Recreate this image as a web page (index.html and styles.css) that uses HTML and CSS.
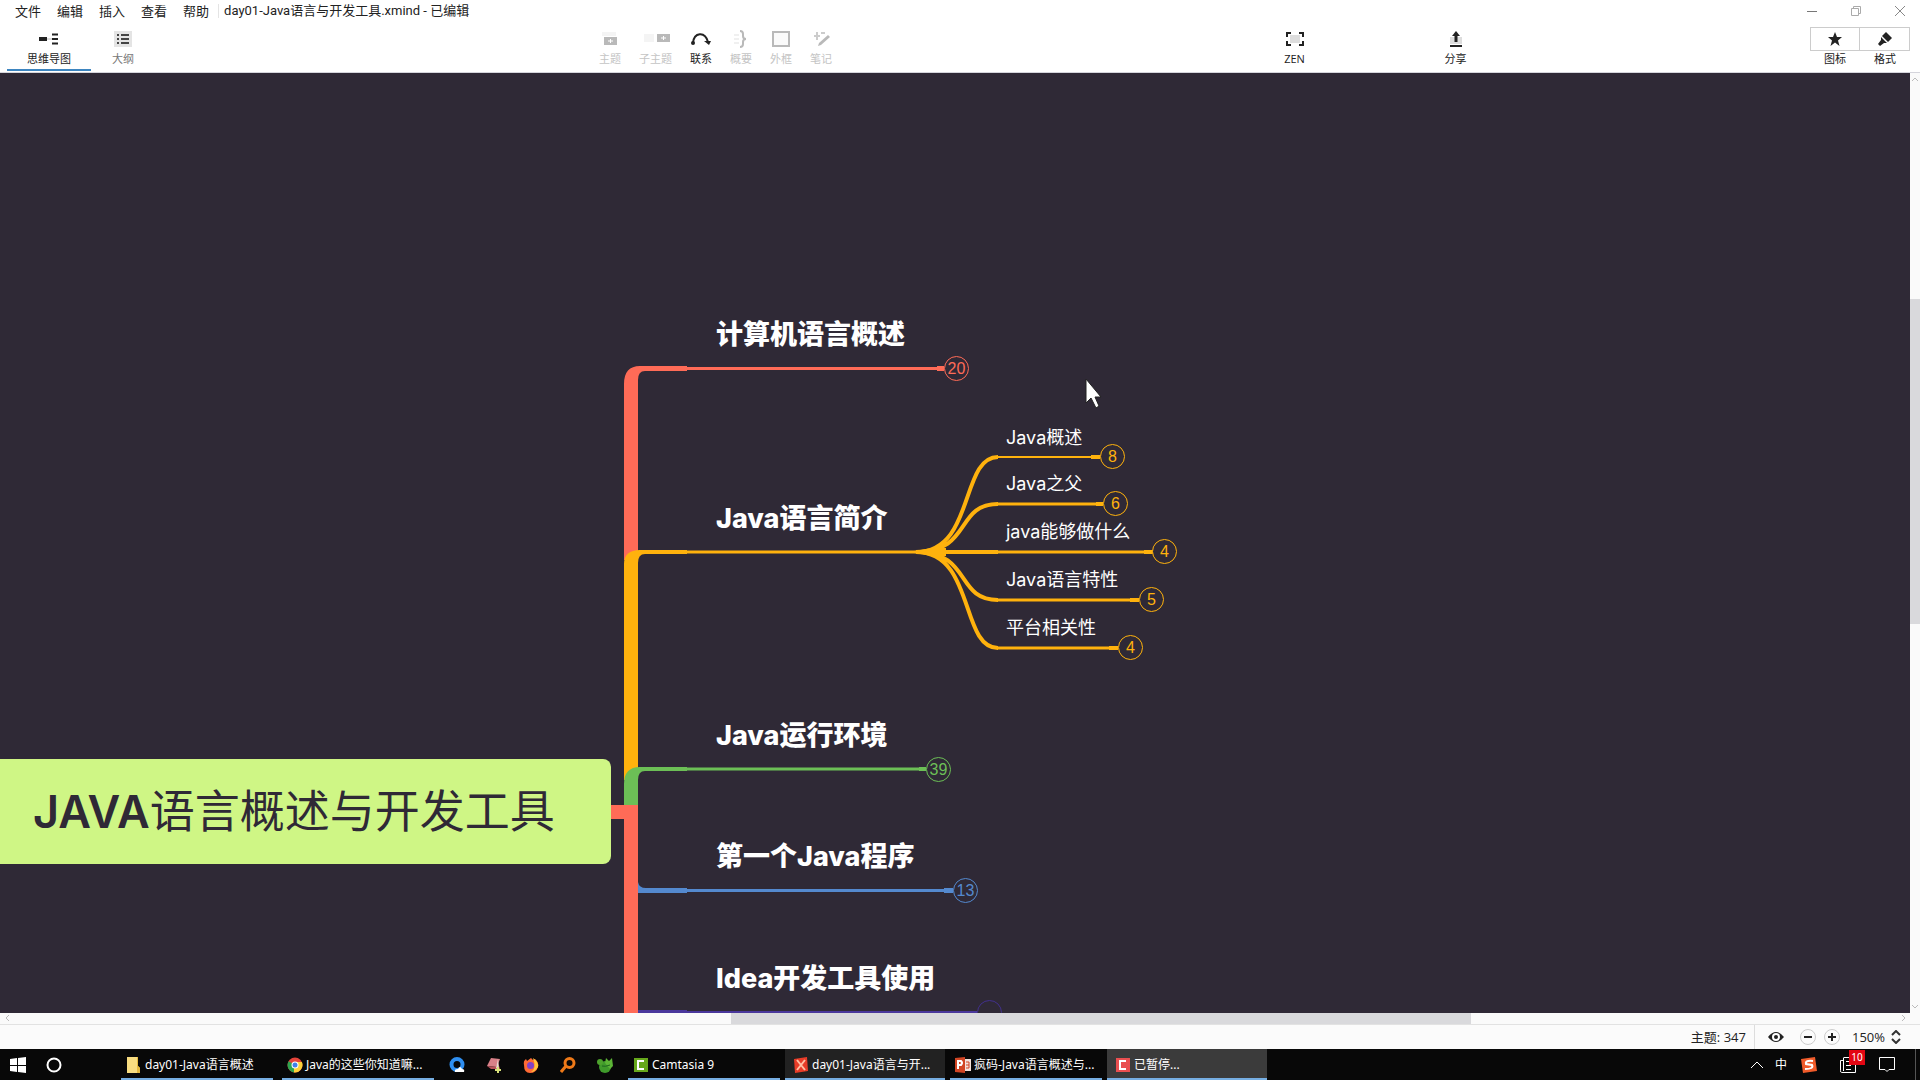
FILE: index.html
```html
<!DOCTYPE html>
<html lang="zh-CN">
<head>
<meta charset="utf-8">
<title>day01-Java语言与开发工具.xmind</title>
<link rel="stylesheet" href="styles.css">
</head>
<body>
<header class="titlebar">
  <nav class="menu">
    <button>文件</button><button>编辑</button><button>插入</button><button>查看</button><button>帮助</button>
  </nav>
  <h1 class="doc-title">day01-Java语言与开发工具.xmind - 已编辑</h1>
  <div class="window-buttons">
    <button aria-label="最小化"><svg width="12" height="12"><path d="M1 6.500H11" stroke="#777" fill="none"/></svg></button>
    <button aria-label="还原"><svg width="12" height="12"><path d="M1.500 3.500h7v7h-7zM3.500 3V1.500h7v7H9" stroke="#aaa" fill="none"/></svg></button>
    <button aria-label="关闭"><svg width="12" height="12"><path d="M1 1L11 11M11 1L1 11" stroke="#888" fill="none"/></svg></button>
  </div>
</header>
<div class="toolbar">
  <div class="tabs">
    <button class="tab active"><svg width="20" height="18"><path d="M0 7h8v4H0z" fill="#222"/><path d="M8 8h5v2H8z" fill="#ddd"/><path d="M13 4.500h6M13 9h6M13 13.500h6" stroke="#222" stroke-width="2"/></svg><span>思维导图</span></button>
    <button class="tab"><svg width="18" height="18"><path d="M0 1h18v16H0z" fill="#e4e4e4"/><path d="M3 5h2M7 5h8M3 9h2M7 9h8M3 13h2M7 13h8" stroke="#444" stroke-width="2"/></svg><span>大纲</span></button>
  </div>
  <div class="tools">
    <button class="tool" disabled><svg width="20" height="18"><path d="M2 2h14v4H2z" fill="#f4f4f4"/><path d="M4 7h13v8H4z" fill="#b9b9b9"/><path d="M10.500 9v4M8 11h5" stroke="#fff"/></svg><span>主题</span></button>
    <button class="tool" disabled><svg width="28" height="18"><path d="M2 4h10v8H2z" fill="#f4f4f4"/><path d="M15 4h13v8H15z" fill="#b9b9b9"/><path d="M21.500 6v4M19 8h5" stroke="#fff"/></svg><span>子主题</span></button>
    <button class="tool"><svg width="20" height="18"><path d="M2 13C3 2 14 1 17 12" stroke="#222" stroke-width="2" fill="none"/><circle cx="2" cy="13" r="2" fill="#222"/><path d="M13 11l7 0-2 4z" fill="#222"/></svg><span>联系</span></button>
    <button class="tool" disabled><svg width="20" height="18"><path d="M3 5h5M3 9h5M3 13h5" stroke="#f0f0f0" stroke-width="2"/><path d="M9 1q3 0 3 3v2q0 3 3 3q-3 0-3 3v2q0 3-3 3" stroke="#b9b9b9" stroke-width="2" fill="none"/></svg><span>概要</span></button>
    <button class="tool" disabled><svg width="20" height="18"><path d="M2 2h16v14H2z" stroke="#b9b9b9" stroke-width="2" fill="#fafafa"/></svg><span>外框</span></button>
    <button class="tool" disabled><svg width="20" height="18"><path d="M17 5l2 2-9 8-3 1 1-3z" fill="#b9b9b9"/><path d="M3 6h6M6 2v8M10 3h4" stroke="#ccc" stroke-width="2"/></svg><span>笔记</span></button>
  </div>
  <button class="tool"><svg width="20" height="18"><path d="M5 5h10v8H5z" fill="#ddd"/><path d="M2 7V3h4M14 3h4v4M18 11v4h-4M6 15H2v-4" stroke="#222" stroke-width="2" fill="none"/></svg><span>ZEN</span></button>
  <button class="tool"><svg width="20" height="18"><path d="M4 7h12v7H4z" fill="#ddd"/><path d="M4 16h12" stroke="#222" stroke-width="2"/><path d="M10 12V4" stroke="#222" stroke-width="3"/><path d="M10 1l4 5H6z" fill="#222"/></svg><span>分享</span></button>
  <div class="panels">
    <button class="panel"><i><svg width="16" height="16"><path d="M8 1l2 5h5l-4 3.500L12.500 15 8 11.500 3.500 15 5 9.500 1 6h5z" fill="#222"/></svg></i><span>图标</span></button>
    <button class="panel"><i><svg width="16" height="16"><path d="M9 1l6 6-4 4-6-6z" fill="#222"/><path d="M4 6l6 6H7l-4 3-2-2 3-4z" fill="#222"/></svg></i><span>格式</span></button>
  </div>
</div>
<div class="workspace">
  <main class="canvas">
    <svg class="links" width="1910" height="940" viewBox="0 73 1910 940" fill="none">
      <path d="M624 560V384Q624 366 640 366H687V371H645Q638 371 638 380V560z" fill="#ff6b57"/>
      <path d="M687 368.500H937" stroke="#ff6b57" stroke-width="3"/><path d="M937 368.500H944" stroke="#ff6b57" stroke-width="5"/>
      <path d="M624 780V564Q624 550 640 550H687V554H645Q638 554 638 563V780z" fill="#ffb20d"/>
      <path d="M687 552H920" stroke="#ffb20d" stroke-width="3"/>
      <g stroke="#ffb20d" stroke-width="4">
        <path d="M916 552C975 552 960 457 998 457M916 552C972 552 955 504 998 504M916 552H998M916 552C972 552 955 600 998 600M916 552C975 552 960 648 998 648"/>
      </g>
      <path d="M914 551L932 548H946V556H932L914 553z" fill="#ffb20d"/>
      <path d="M997 457H1092" stroke="#ffb20d" stroke-width="2"/>
      <path d="M997 504H1097M997 552H1145M997 600H1131M997 648H1110" stroke="#ffb20d" stroke-width="3"/>
      <path d="M1091 457H1100M1096 504H1103M1144 552H1153M1130 600H1139M1109 648H1118" stroke="#ffb20d" stroke-width="4"/>
      <path d="M624 806V784Q624 767 640 767H687V771H645Q638 771 638 780V806z" fill="#6cbf56"/>
      <path d="M687 769H920" stroke="#6cbf56" stroke-width="3"/><path d="M919 769H926" stroke="#6cbf56" stroke-width="4"/>
      <path d="M638 882Q639 888 646 888H687V893H638z" fill="#5489cf"/>
      <path d="M687 890.500H945" stroke="#5489cf" stroke-width="3"/><path d="M944 890.500H953" stroke="#5489cf" stroke-width="5"/>
      <path d="M638 1010H687V1013H638z" fill="#4a379c"/><path d="M687 1012H977" stroke="#4a379c" stroke-width="2"/>
      <path d="M611 805H638V1013H624V819H611z" fill="#ff6b57"/>
    </svg>
    <div class="central"><b>JAVA</b>语言概述与开发工具</div>
    <div class="topic t1">计算机语言概述</div>
    <div class="topic t2">Java语言简介</div>
    <div class="topic t3">Java运行环境</div>
    <div class="topic t4">第一个Java程序</div>
    <div class="topic t5">Idea开发工具使用</div>
    <div class="sub s1">Java概述</div>
    <div class="sub s2">Java之父</div>
    <div class="sub s3">java能够做什么</div>
    <div class="sub s4">Java语言特性</div>
    <div class="sub s5">平台相关性</div>
    <button class="count red c1">20</button>
    <button class="count yellow c2">8</button>
    <button class="count yellow c3">6</button>
    <button class="count yellow c4">4</button>
    <button class="count yellow c5">5</button>
    <button class="count yellow c6">4</button>
    <button class="count green c7">39</button>
    <button class="count blue c8">13</button>
    <button class="count purple c9" aria-label="展开"></button>
    <svg class="cursor" width="18" height="32"><path d="M1 1V25L6 20L11 30L14 28L10 19H16z" fill="#fff" stroke="#222"/></svg>
  </main>
  <div class="vscroll"><svg width="10" height="12"><path d="M2 8l3-3 3 3" stroke="#bbb" fill="none"/></svg><div class="vthumb"></div><svg width="10" height="12"><path d="M2 4l3 3 3-3" stroke="#bbb" fill="none"/></svg></div>
</div>
<div class="hscroll"><svg width="12" height="10"><path d="M9 2L6 5l3 3" stroke="#bbb" fill="none"/></svg><div class="hthumb"></div><svg width="12" height="10"><path d="M4 2l3 3-3 3" stroke="#bbb" fill="none"/></svg></div>
<footer class="status">
  <span class="total">主题: 347</span>
  <button aria-label="预览"><svg width="18" height="14"><path d="M1 7Q9-3 17 7Q9 17 1 7z" fill="#222"/><circle cx="9" cy="7" r="4" fill="#fff"/><circle cx="9" cy="7" r="2" fill="#222"/></svg></button>
  <div class="zoom">
    <button aria-label="缩小"><svg width="16" height="16"><circle cx="8" cy="8" r="7.500" fill="none" stroke="#ccc"/><path d="M4 8h8" stroke="#222" stroke-width="2"/></svg></button>
    <button aria-label="放大"><svg width="16" height="16"><circle cx="8" cy="8" r="7.500" fill="none" stroke="#ccc"/><path d="M4 8h8M8 4v8" stroke="#222" stroke-width="2"/></svg></button>
  </div>
  <button class="percent">150%<svg width="10" height="14"><path d="M1 5l4-4 4 4M1 9l4 4 4-4" stroke="#333" stroke-width="2" fill="none"/></svg></button>
</footer>
<div class="taskbar">
  <div class="start">
    <button aria-label="开始"><svg width="16" height="16"><path d="M0 2l7-1v7H0zM8 1l8-1v8H8zM0 9h7v6l-7-1zM8 9h8v7l-8-1z" fill="#fff"/></svg></button>
    <button aria-label="搜索"><svg width="16" height="16"><circle cx="8" cy="8" r="6.500" fill="none" stroke="#fff" stroke-width="2"/></svg></button>
  </div>
  <button class="task"><svg width="16" height="16"><path d="M1 0h11v9l2 2v5H1z" fill="#f8dc80"/><path d="M11 0h1v9l2 2v5h-3z" fill="#e5b93e"/></svg>day01-Java语言概述</button>
  <button class="task"><svg width="16" height="16"><circle cx="8" cy="8" r="7.500" fill="#e5443a"/><path d="M8 8L1.500 4.300A7.500 7.500 0 0 0 7 15.400z" fill="#2da44e"/><path d="M8 8h-1v7.400A7.500 7.500 0 0 0 14.900 5H8z" fill="#fdd13a"/><circle cx="8" cy="8" r="3.500" fill="#fff"/><circle cx="8" cy="8" r="2.500" fill="#4080ea"/></svg>Java的这些你知道嘛...</button>
  <div class="pins">
    <button aria-label="QQ浏览器"><svg width="16" height="16"><circle cx="8" cy="7.500" r="5.500" fill="none" stroke="#2f8ff0" stroke-width="4"/><path d="M6 15q-1-3 3-3 2-4 4 0 3 0 2 3z" fill="#fff"/></svg></button>
    <button aria-label="工具"><svg width="16" height="16"><path d="M5 1l9 1-3 8-10-1z" fill="#d98088"/><path d="M1 9l9 1 2-5 2 7-9 0z" fill="#b9525a"/><path d="M12 2l1 11-3-2z" fill="#e9ddd2"/><path d="M12 10v6M9 13h6" stroke="#d8e27a" stroke-width="2"/></svg></button>
    <button aria-label="Firefox"><svg width="16" height="16"><path d="M1 8Q0 4 3 2l1 2 4-3 2 2 2-1q4 3 3 8-2 6-8 6T1 8z" fill="#ff6a34"/><path d="M10 1q6 4 5 9-3 5-7 5 6-3 2-14z" fill="#ffc53a"/><circle cx="7.500" cy="8.500" r="3.500" fill="#8142c7"/></svg></button>
    <button aria-label="搜索工具"><svg width="16" height="16"><circle cx="9.500" cy="6" r="4.500" fill="none" stroke="#ee7918" stroke-width="3"/><path d="M6 9l-5 6" stroke="#ee7918" stroke-width="3"/></svg></button>
    <button aria-label="编辑器"><svg width="16" height="16"><circle cx="8" cy="10" r="6" fill="#3f9a2b"/><circle cx="3" cy="5" r="3" fill="#4da32d"/><path d="M8 6l1-5 3 3 3-3 1 8-3 3z" fill="#5cb436"/><path d="M5 9q3 1 8-1" stroke="#1e641e" fill="none"/></svg></button>
  </div>
  <button class="task"><svg width="16" height="16"><path d="M1 1h14v14H1z" fill="#66a81b"/><path d="M11 4H5v8h6" stroke="#fff" stroke-width="2" fill="none"/></svg>Camtasia 9</button>
  <button class="task wide open"><svg width="16" height="16"><path d="M1 2l13-2 1 14-13 2z" fill="#e83c28"/><path d="M4 3l8 10M12 3L4 13" stroke="#ffc0a5" stroke-width="2"/></svg>day01-Java语言与开...</button>
  <button class="task"><svg width="16" height="16"><path d="M7 2h9v12H7z" fill="#f2e2dc"/><path d="M0 1l10-1v16L0 15z" fill="#d14524"/><path d="M3 12V4h3q2 2 0 4H3" stroke="#fff" stroke-width="2" fill="none"/><path d="M11 5h3v6h-3M11 8h3" stroke="#d14524" fill="none"/></svg>疯码-Java语言概述与...</button>
  <button class="task wide current"><svg width="16" height="16"><path d="M1 1h14v14H1z" fill="#e94f50"/><path d="M11 4H5v8h6" stroke="#fff" stroke-width="2" fill="none"/></svg>已暂停...</button>
  <div class="tray">
    <button aria-label="显示隐藏的图标"><svg width="14" height="10"><path d="M1 8l6-6 6 6" stroke="#fff" fill="none"/></svg></button>
    <button class="ime">中</button>
    <button aria-label="搜狗输入法"><svg width="16" height="16"><path d="M0 2l14-2 2 14-14 2z" fill="#f05b2a"/><path d="M12 4Q4 3 5 7l6 1q2 4-7 4" stroke="#fff" stroke-width="2" fill="none"/></svg></button>
    <button class="news" aria-label="资讯"><svg width="16" height="16"><path d="M3.500.500h12v15h-14q-1 0-1-2V3.500h3M3.500 1v13M6 4.500h5M6 8.500h5M6 12.500h5" stroke="#fff" fill="none"/></svg><span class="badge">10</span></button>
    <button aria-label="通知"><svg width="16" height="16"><path d="M.500.500h15v12H10l-2 2-2-2H.500z" stroke="#fff" fill="none"/></svg></button>
  </div>
</div>
</body>
</html>
```
FILE: styles.css
```css
* { box-sizing: border-box; }
body {
  margin: 0;
  height: 100vh;
  display: flex;
  flex-direction: column;
  overflow: hidden;
  background: #fff;
  color: #222;
  font-family: "Open Sans", "Noto Sans CJK SC", sans-serif;
}
button {
  border: 0;
  padding: 0;
  background: none;
  color: inherit;
  font: inherit;
}
svg { display: block; flex: none; }

.titlebar { display: flex; align-items: center; height: 22px; padding: 0 14px 0 15px; font-size: 13px; line-height: 22px; }
.menu { display: flex; gap: 16px; padding-right: 9px; }
.doc-title { margin: 0; padding-left: 5px; border-left: 1px solid #e4e4e4; font: 400 13px/14px Roboto, "Noto Sans CJK SC", sans-serif; }
.window-buttons { display: flex; gap: 32px; margin-left: auto; }

.toolbar {
  display: grid;
  grid-template-columns: 576fr 638fr 161fr 161fr 384fr;
  height: 51px;
  border-bottom: 1px solid #d5d5dc;
  font-size: 11px;
  line-height: 16px;
}
.tabs, .tools, .panels { display: flex; }
.tabs { padding-left: 7px; }
.tab, .tool, .panel { display: flex; flex-direction: column; align-items: center; }
.tab, .tool { padding-top: 8px; gap: 3px; }
.tab { width: 64px; color: #777; }
.tab.active { width: 84px; height: 49px; color: #222; border-bottom: 2px solid #3d85c0; }
.tools { gap: 18px; padding-left: 23px; }
.tool:disabled { color: #c4c4c4; }
.panels { justify-content: flex-end; padding: 5px 10px 0 0; }
.panel i { display: flex; align-items: center; justify-content: center; width: 50px; height: 24px; border: 1px solid #ccc; }
.panel + .panel i { border-left: 0; }

.workspace { flex: 1; min-height: 0; display: flex; }
.canvas { position: relative; flex: 1; overflow: hidden; background: #2f2936; color: #fff; }
.links { position: absolute; left: 0; top: 0; }
.central {
  position: absolute; left: -40px; top: 686px;
  width: 651px; height: 105px; padding-left: 73px;
  border-radius: 8px; background: #cff685; color: #2f2936;
  font: 400 45px/106px Inter, "Noto Sans CJK SC", sans-serif;
  white-space: nowrap;
}
.central b { font-weight: 600; }
.topic { position: absolute; left: 716px; font: 800 27px/36px Inter, "Noto Sans CJK SC", sans-serif; white-space: nowrap; }
.t1 { top: 244px; }
.t2 { top: 428px; }
.t3 { top: 645px; }
.t4 { top: 766px; }
.t5 { top: 888px; }
.sub { position: absolute; left: 1006px; font: 400 18px/24px Inter, "Noto Sans CJK SC", sans-serif; white-space: nowrap; }
.s1 { top: 353px; }
.s2 { top: 399px; }
.s3 { top: 447px; }
.s4 { top: 495px; }
.s5 { top: 543px; }
.count {
  position: absolute; width: 25px; height: 25px;
  border: 1px solid; border-radius: 50%;
  font: 400 16px/23px "Liberation Sans", sans-serif; text-align: center;
  background: #2f2936;
}
.red { color: #ff6b57; }
.yellow { color: #ffb20d; }
.green { color: #6cbf56; }
.blue { color: #5489cf; }
.purple { color: #42308c; }
.c1 { left: 944px; top: 283px; }
.c2 { left: 1100px; top: 371px; }
.c3 { left: 1103px; top: 418px; }
.c4 { left: 1152px; top: 466px; }
.c5 { left: 1139px; top: 514px; }
.c6 { left: 1118px; top: 562px; }
.c7 { left: 926px; top: 684px; }
.c8 { left: 953px; top: 805px; }
.c9 { left: 977px; top: 927px; }
.cursor { position: absolute; left: 1085px; top: 305px; }

.vscroll { display: grid; grid-template-rows: 12px 214fr 325fr 377fr 12px; width: 10px; background: #fafafa; }
.vthumb { grid-row: 3; background: #d9d9dc; }
.vscroll svg:last-child { grid-row: 5; }
.hscroll { display: grid; grid-template-columns: 12px 719fr 740fr 427fr 22px; height: 11px; background: #fafafa; }
.hthumb { grid-column: 3; background: #d9d9dc; }
.hscroll svg:last-child { grid-column: 5; }

.status { display: flex; align-items: center; justify-content: flex-end; height: 25px; padding-right: 19px; background: #fbfbfb; font-size: 13px; border-top: 1px solid #e2e2e2; }
.total { padding-right: 8px; margin-right: 12px; border-right: 1px solid #ddd; line-height: 24px; }
.zoom { display: flex; gap: 8px; margin: 0 12px 0 15px; }
.percent { display: flex; align-items: center; gap: 6px; }

.taskbar { display: flex; height: 31px; background: #080808; color: #fff; font: 400 12px/18px "Noto Sans", "Noto Sans CJK SC", sans-serif; }
.start { display: flex; gap: 20px; padding-left: 10px; width: 121px; }
.task { display: flex; align-items: center; gap: 3px; width: 152px; margin-right: 9px; padding: 2px 0 0 5px; border-bottom: 2px solid #76aee2; white-space: nowrap; overflow: hidden; }
.task.wide { width: 160px; padding-left: 8px; }
.task.wide, .pins + .task, .wide + .task { margin-right: 5px; }
.task.open { background: #222; }
.task.current { background: #3b3b3b; }
.pins { display: flex; gap: 21px; padding: 0 15px 0 6px; }
.tray { display: flex; align-items: center; margin-left: auto; margin-right: 4px; padding-right: 20px; gap: 23px; border-right: 1px solid #555; }
.ime { margin: 0 -9px 0 -12px; }
.news { position: relative; }
.badge { position: absolute; left: 9px; top: -7px; width: 16px; height: 15px; background: #e30613; font-size: 10px; line-height: 15px; text-align: center; }
```
